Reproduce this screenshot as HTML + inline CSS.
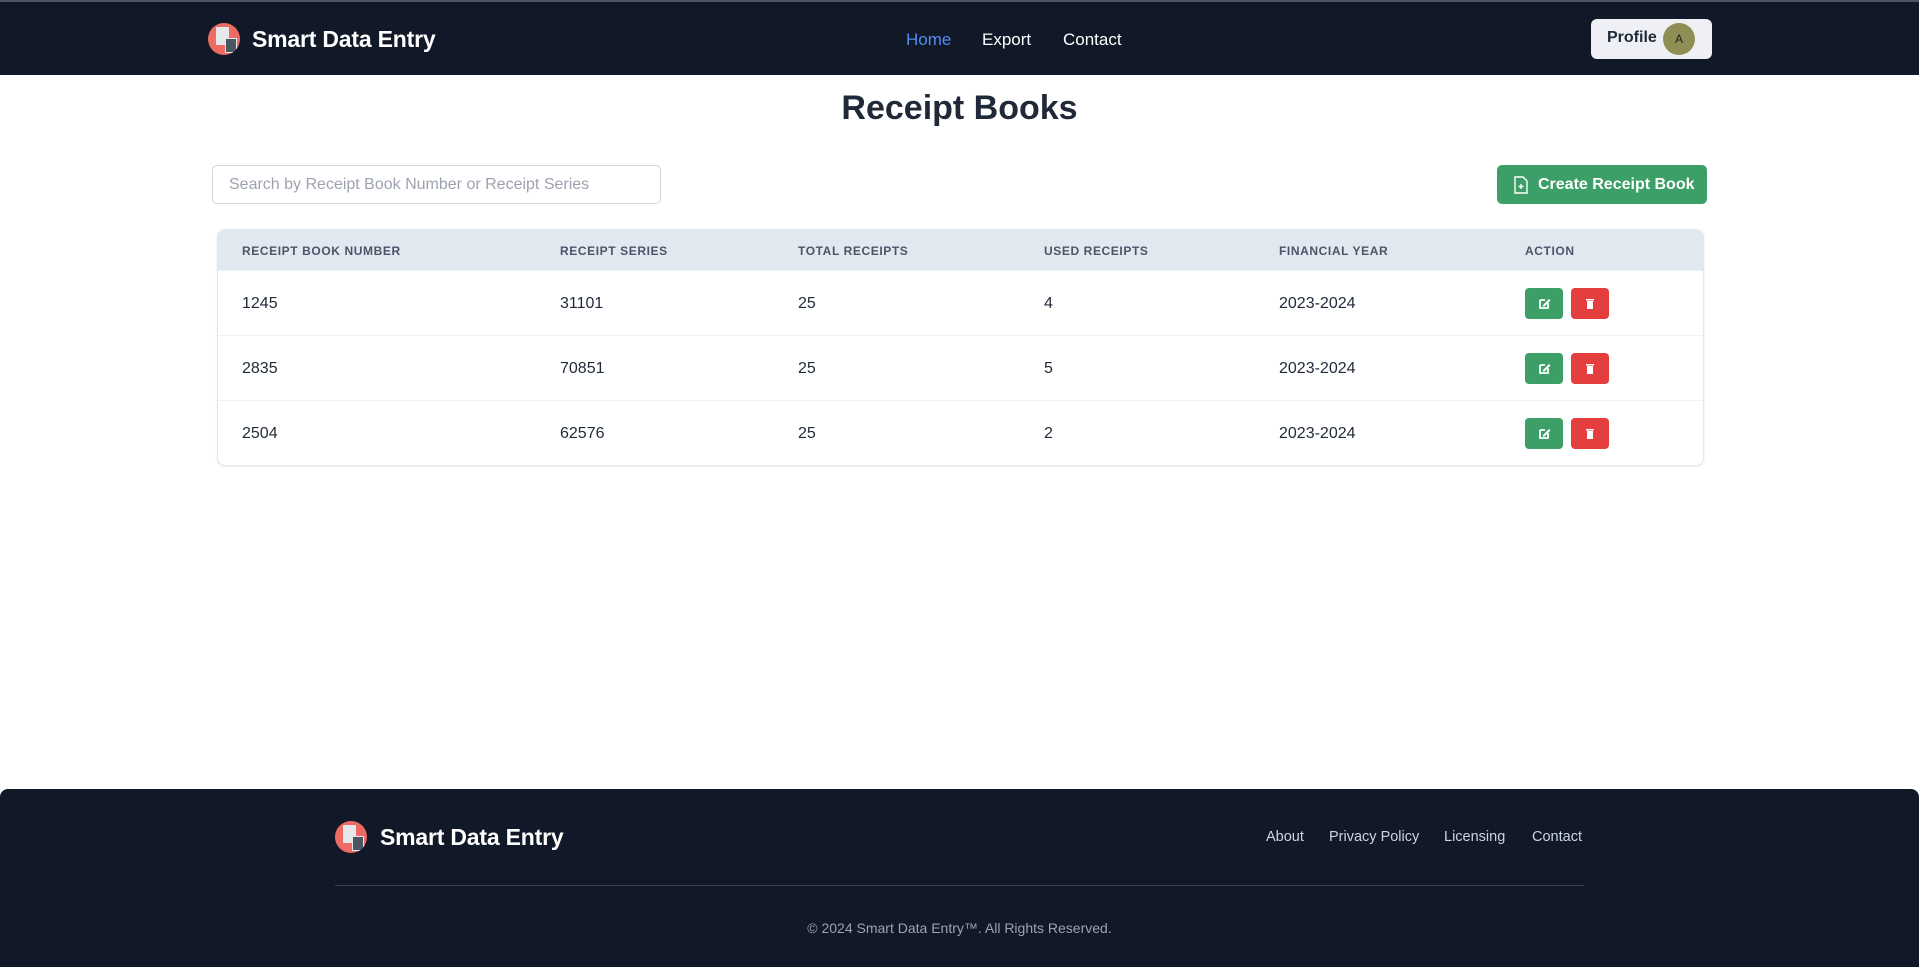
<!DOCTYPE html>
<html><head><meta charset="utf-8"><style>
*{box-sizing:border-box;margin:0;padding:0}
body{width:1919px;height:967px;background:#fff;font-family:"Liberation Sans",Arial,sans-serif;position:relative;overflow:hidden;color:#1a202c}
.hdr{position:absolute;left:0;top:0;width:1919px;height:75px;background:#111827;border-top:2px solid #4b5563}
.logo{position:absolute;width:32px;height:32px;border-radius:50%;background:#ee6b63;overflow:hidden}
.logo .p{position:absolute;left:8px;top:4px;width:13px;height:18px;background:#e5e7eb}
.logo .c{position:absolute;left:17px;top:15px;width:12px;height:15px;background:#4b5563;border:1px solid #e5e7eb}
.brand{position:absolute;color:#fff;font-size:23px;font-weight:600;letter-spacing:-0.2px}
.nav{position:absolute;top:28px;font-size:17px;color:#fff}
.prof{position:absolute;left:1591px;top:17px;width:121px;height:40px;background:#eef0f5;border-radius:6px}
.prof span{position:absolute;left:16px;top:10px;font-size:16px;font-weight:600;color:#1f2937}
.av{position:absolute;left:72px;top:4px;width:32px;height:32px;border-radius:50%;background:#8f8f55;font-size:12px;text-align:center;line-height:32px;color:#222}
h1{position:absolute;left:0;width:1919px;text-align:center;top:89px;font-size:34px;font-weight:700;color:#1f2937}
.search{position:absolute;left:212px;top:165px;width:449px;height:39px;border:1px solid #d1d5db;border-radius:5px;padding-left:16px;line-height:37px;font-size:16px;color:#9ca3af}
.create{position:absolute;left:1497px;top:165px;width:210px;height:39px;background:#3b9f67;border-radius:5px;color:#fff;font-size:16px;font-weight:600;line-height:39px;padding-left:41px}
.create svg{position:absolute;left:17px;top:11px}
.tbl{position:absolute;left:217px;top:229px;width:1487px;height:237px;border:1px solid #e2e8f0;border-radius:8px;overflow:hidden;box-shadow:0 1px 2px rgba(0,0,0,.08)}
.th{position:absolute;left:0;top:0;width:100%;height:40px;background:#e2e8f0}
.th div{position:absolute;top:14px;font-size:12px;font-weight:700;letter-spacing:.6px;color:#4a5568}
.row{position:absolute;left:0;width:100%;height:65px;border-top:1px solid #edf2f7}
.row div.t{position:absolute;top:24px;font-size:16px;color:#1f2937}
.b{position:absolute;top:17px;width:38px;height:31px;border-radius:4px}
.ft{position:absolute;left:0;top:789px;width:1919px;height:178px;background:#111827;border-radius:8px 8px 0 0}
.fl{position:absolute;top:829px;font-size:14.5px;color:#cbd5e0}
</style></head><body>
<div class="hdr">
<div class="logo" style="left:208px;top:21px"><div class="p"></div><div class="c"></div></div>
<div class="brand" style="left:252px;top:24px">Smart Data Entry</div>
<div class="nav" style="left:906px;color:#4f8df7">Home</div>
<div class="nav" style="left:982px">Export</div>
<div class="nav" style="left:1063px">Contact</div>
<div class="prof"><span>Profile</span><div class="av">A</div></div>
</div>
<h1>Receipt Books</h1>
<div class="search">Search by Receipt Book Number or Receipt Series</div>
<div class="create"><svg width="14" height="18" viewBox="0 0 14 18" fill="none" stroke="#fff" stroke-width="1.4"><path d="M1 1h8l4 4v12H1z"/><path d="M7 8v5M4.5 10.5h5"/></svg>Create Receipt Book</div>
<div class="tbl">
<div class="th"><div style="left:24px">RECEIPT BOOK NUMBER</div><div style="left:342px">RECEIPT SERIES</div><div style="left:580px">TOTAL RECEIPTS</div><div style="left:826px">USED RECEIPTS</div><div style="left:1061px">FINANCIAL YEAR</div><div style="left:1307px">ACTION</div></div>
<div class="row" style="top:40px"><div class="t" style="left:24px">1245</div><div class="t" style="left:342px">31101</div><div class="t" style="left:580px">25</div><div class="t" style="left:826px">4</div><div class="t" style="left:1061px">2023-2024</div>
<div class="b" style="left:1307px;background:#3b9f67"><svg width="38" height="31"><path d="M15 12h5M15 12v8h8v-5" stroke="#fff" stroke-width="1.8" fill="none"/><path d="M18 17l6-6 1.5 1.5-6 6H18z" fill="#fff"/></svg></div><div class="b" style="left:1353px;background:#e53e3e"><svg width="38" height="31"><rect x="15" y="11" width="8" height="1.5" fill="#fff"/><rect x="16" y="13" width="6" height="8" fill="#fff"/></svg></div></div>
<div class="row" style="top:105px"><div class="t" style="left:24px">2835</div><div class="t" style="left:342px">70851</div><div class="t" style="left:580px">25</div><div class="t" style="left:826px">5</div><div class="t" style="left:1061px">2023-2024</div>
<div class="b" style="left:1307px;background:#3b9f67"><svg width="38" height="31"><path d="M15 12h5M15 12v8h8v-5" stroke="#fff" stroke-width="1.8" fill="none"/><path d="M18 17l6-6 1.5 1.5-6 6H18z" fill="#fff"/></svg></div><div class="b" style="left:1353px;background:#e53e3e"><svg width="38" height="31"><rect x="15" y="11" width="8" height="1.5" fill="#fff"/><rect x="16" y="13" width="6" height="8" fill="#fff"/></svg></div></div>
<div class="row" style="top:170px"><div class="t" style="left:24px">2504</div><div class="t" style="left:342px">62576</div><div class="t" style="left:580px">25</div><div class="t" style="left:826px">2</div><div class="t" style="left:1061px">2023-2024</div>
<div class="b" style="left:1307px;background:#3b9f67"><svg width="38" height="31"><path d="M15 12h5M15 12v8h8v-5" stroke="#fff" stroke-width="1.8" fill="none"/><path d="M18 17l6-6 1.5 1.5-6 6H18z" fill="#fff"/></svg></div><div class="b" style="left:1353px;background:#e53e3e"><svg width="38" height="31"><rect x="15" y="11" width="8" height="1.5" fill="#fff"/><rect x="16" y="13" width="6" height="8" fill="#fff"/></svg></div></div>
</div>
<div class="ft"></div>
<div class="logo" style="left:335px;top:821px"><div class="p"></div><div class="c"></div></div>
<div class="brand" style="left:380px;top:824px">Smart Data Entry</div>
<div class="fl" style="left:1266px">About</div>
<div class="fl" style="left:1329px">Privacy Policy</div>
<div class="fl" style="left:1444px">Licensing</div>
<div class="fl" style="left:1532px">Contact</div>
<div style="position:absolute;left:335px;top:885px;width:1249px;height:1px;background:#374151"></div>
<div style="position:absolute;left:0;width:1919px;top:920px;text-align:center;font-size:14px;color:#9ca3af">© 2024 Smart Data Entry™. All Rights Reserved.</div>
</body></html>
